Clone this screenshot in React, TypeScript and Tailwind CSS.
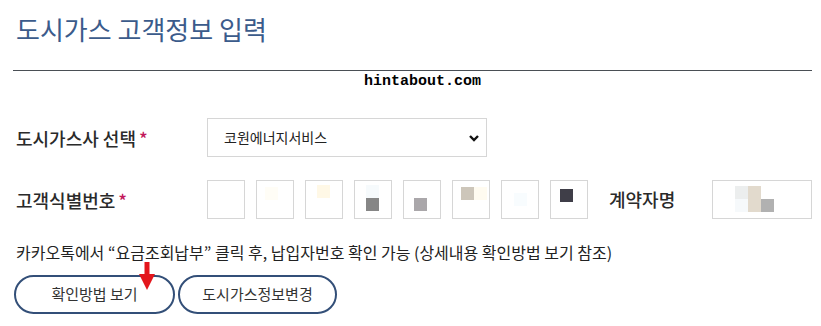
import React from "react";

type Cell = { x: number; y: number; w: number; h: number; c: string };

const codeCells: Cell[][] = [
  [],
  [{ x: 8, y: 6, w: 13, h: 13, c: "#fffdf6" }],
  [{ x: 11, y: 4, w: 13, h: 13, c: "#fff8e6" }],
  [
    { x: 11, y: 4, w: 13, h: 13, c: "#f6fafc" },
    { x: 11, y: 17, w: 13, h: 13, c: "#868686" },
  ],
  [{ x: 10, y: 17, w: 13, h: 13, c: "#aaa7aa" }],
  [
    { x: 8, y: 6, w: 13, h: 13, c: "#cdc6ba" },
    { x: 21, y: 6, w: 13, h: 13, c: "#fffbf0" },
  ],
  [{ x: 12, y: 12, w: 13, h: 13, c: "#f8fcfe" }],
  [{ x: 9, y: 8, w: 13, h: 13, c: "#3f3e48" }],
];

const nameCells: Cell[] = [
  { x: 22, y: 5, w: 13, h: 13, c: "#eceeee" },
  { x: 22, y: 18, w: 13, h: 13, c: "#f6f9fb" },
  { x: 35, y: 5, w: 13, h: 26, c: "#e2dacd" },
  { x: 48, y: 18, w: 13, h: 13, c: "#b1b1b1" },
];

function Mosaic({ cells, w, h }: { cells: Cell[]; w: number; h: number }) {
  return (
    <svg width={w} height={h} className="block">
      {cells.map((c, i) => (
        <rect key={i} x={c.x} y={c.y} width={c.w} height={c.h} fill={c.c} />
      ))}
    </svg>
  );
}

function Label({ text, star }: { text: string; star?: boolean }) {
  return (
    <div className="w-[191px] text-[18px] font-medium text-[#2a2a2a] leading-none">
      {text}
      {star && <span className="ml-[3px] text-[#c2185b]">*</span>}
    </div>
  );
}

export default function App() {
  return (
    <div
      className="w-[821px] h-[326px] bg-white overflow-hidden relative"
      style={{ fontFamily: '"Noto Sans CJK KR", "Noto Sans", sans-serif' }}
    >
      <div className="pl-[16px] pt-[13px] h-[45px]">
        <h1 className="text-[26px] leading-[31px] text-[#3b5b8b] font-normal">
          도시가스 고객정보 입력
        </h1>
      </div>

      <div className="mx-[13px] mt-[25px] w-[799px] h-px bg-[#4a4f55]" />

      <div className="h-[21px] flex justify-center items-center pl-[24px]">
        <span
          className="text-[15px] text-black font-bold leading-none"
          style={{ fontFamily: '"Liberation Mono", monospace' }}
        >
          hintabout.com
        </span>
      </div>

      <div className="pl-[16px] mt-[26px] flex items-center h-[39px]">
        <Label text="도시가스사 선택" star />
        <div className="w-[280px] h-[39px] border border-[#d6d6d6] flex items-center justify-between pl-[16px] pr-[6px]">
          <span className="text-[14px] text-[#222]">코원에너지서비스</span>
          <svg width="12" height="10" viewBox="0 0 12 10">
            <path d="M2 3 L6 7 L10 3" stroke="#111" strokeWidth="2.4" fill="none" />
          </svg>
        </div>
      </div>

      <div className="pl-[16px] mt-[23px] flex items-center h-[39px]">
        <Label text="고객식별번호" star />
        <div className="flex gap-[11px]">
          {codeCells.map((cells, i) => (
            <div key={i} className="w-[38px] h-[39px] border border-[#d6d6d6]">
              <Mosaic cells={cells} w={36} h={37} />
            </div>
          ))}
        </div>
        <div className="ml-[21px] w-[103px] text-[18px] font-medium text-[#2a2a2a]">
          계약자명
        </div>
        <div className="w-[100px] h-[39px] border border-[#d6d6d6]">
          <Mosaic cells={nameCells} w={98} h={37} />
        </div>
      </div>

      <p className="pl-[16px] mt-[22px] text-[16px] leading-[22px] text-[#222]">
        카카오톡에서 “요금조회납부” 클릭 후, 납입자번호 확인 가능 (상세내용 확인방법 보기 참조)
      </p>

      <div className="pl-[14px] mt-[12px] flex gap-[3px]">
        <button className="w-[161px] h-[39px] rounded-full border-2 border-[#334f78] text-[15px] text-[#333] bg-white">
          확인방법 보기
        </button>
        <button className="w-[159px] h-[39px] rounded-full border-2 border-[#334f78] text-[15px] text-[#333] bg-white">
          도시가스정보변경
        </button>
      </div>

      <svg className="absolute left-[138px] top-[262px]" width="18" height="29" viewBox="0 0 18 29">
        <rect x="6.5" y="0" width="5" height="13" fill="#e3161c" />
        <polygon points="1,12 17,12 9,28" fill="#e3161c" />
      </svg>
    </div>
  );
}
